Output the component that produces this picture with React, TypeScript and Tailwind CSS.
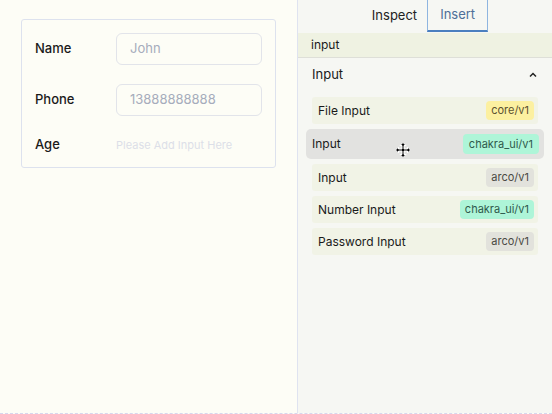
import React from 'react';

const items = [
  { name: 'File Input', tag: 'core/v1', tone: 'bg-[#fcf0a0] text-[#5b5030]' },
  { name: 'Input', tag: 'chakra_ui/v1', tone: 'bg-[#aef5d8] text-[#2e5a4c]', active: true },
  { name: 'Input', tag: 'arco/v1', tone: 'bg-[#e2e2dc] text-[#4a4a44]' },
  { name: 'Number Input', tag: 'chakra_ui/v1', tone: 'bg-[#aef5d8] text-[#2e5a4c]' },
  { name: 'Password Input', tag: 'arco/v1', tone: 'bg-[#e2e2dc] text-[#4a4a44]' },
];

function MoveCursor() {
  return (
    <svg width="16" height="16" viewBox="0 0 16 16" className="absolute left-[395px] top-[142px]">
      <path
        d="M8 0.5 L11 3.5 H9 V7 H12.5 V5 L15.5 8 L12.5 11 V9 H9 V12.5 H11 L8 15.5 L5 12.5 H7 V9 H3.5 V11 L0.5 8 L3.5 5 V7 H7 V3.5 H5 Z"
        fill="#000"
        stroke="#fff"
        strokeWidth="1"
      />
    </svg>
  );
}

export default function App() {
  return (
    <div className="relative flex h-[414px] w-[552px] overflow-hidden border-b border-dashed border-[#d6d6ee] bg-[#fdfdf6] font-['Inter',sans-serif] text-[#1a1a1a]">
      {/* form canvas */}
      <div className="w-[297px] shrink-0 px-[21px] pt-[19px]">
        <div className="w-[255px] rounded-[3px] border border-[#dde2ee] px-[13px] pt-[13px] pb-[12px]">
          <div className="flex h-[32px] items-center">
            <span className="w-[81px] text-[13px] font-medium">Name</span>
            <div className="flex h-[32px] flex-1 items-center rounded-[6px] border border-[#e2e4ea] px-[13px] text-[13px] text-[#a6acbc]">
              John
            </div>
          </div>
          <div className="mt-[19px] flex h-[32px] items-center">
            <span className="w-[81px] text-[13px] font-medium">Phone</span>
            <div className="flex h-[32px] flex-1 items-center rounded-[6px] border border-[#e2e4ea] px-[13px] text-[13px] text-[#a6acbc]">
              13888888888
            </div>
          </div>
          <div className="mt-[19px] flex items-center">
            <span className="w-[81px] text-[13px] font-medium">Age</span>
            <span className="text-[11px] text-[#dcdfe8]">Please Add Input Here</span>
          </div>
        </div>
      </div>

      {/* side panel */}
      <div className="flex flex-1 flex-col border-l border-[#dfe3f0] bg-[#f6f7f3]">
        <div className="flex h-[33px] justify-center">
          <div className="flex h-[32px] items-center px-[10px] text-[13px] text-[#222]">Inspect</div>
          <div className="flex h-[32px] w-[61px] items-center justify-center border-x border-b-2 border-x-[#8fb5e0] border-b-[#4b7fbf] text-[13px] text-[#4e6f98]">
            Insert
          </div>
        </div>
        <div className="flex h-[25px] items-center border-b border-[#dedfd8] bg-[#eff2e2] px-[13px] text-[12px]">
          input
        </div>
        <div className="flex h-[33px] items-center justify-between px-[14px] text-[13px]">
          <span>Input</span>
          <svg width="10" height="10" viewBox="0 0 10 10">
            <path d="M2 6.5 L5 3.5 L8 6.5" fill="none" stroke="#222" strokeWidth="1.5" />
          </svg>
        </div>
        <div className="flex flex-col gap-[5px] px-[14px] pt-[6px]">
          {items.map((it, i) =>
            it.active ? (
              <div
                key={i}
                className="-mx-[6px] flex h-[30px] items-center justify-between rounded-[5px] bg-[#e2e2e0] pl-[6px] pr-[5px] text-[12px]"
              >
                <span>{it.name}</span>
                <span className={`rounded-[4px] px-[6px] py-[2px] text-[11px] ${it.tone}`}>{it.tag}</span>
              </div>
            ) : (
              <div
                key={i}
                className="flex h-[27px] items-center justify-between rounded-[3px] bg-[#f1f3e6] pl-[6px] pr-[4px] text-[12px]"
              >
                <span>{it.name}</span>
                <span className={`rounded-[4px] px-[5px] py-[1px] text-[11px] ${it.tone}`}>{it.tag}</span>
              </div>
            )
          )}
        </div>
      </div>
      <MoveCursor />
    </div>
  );
}
